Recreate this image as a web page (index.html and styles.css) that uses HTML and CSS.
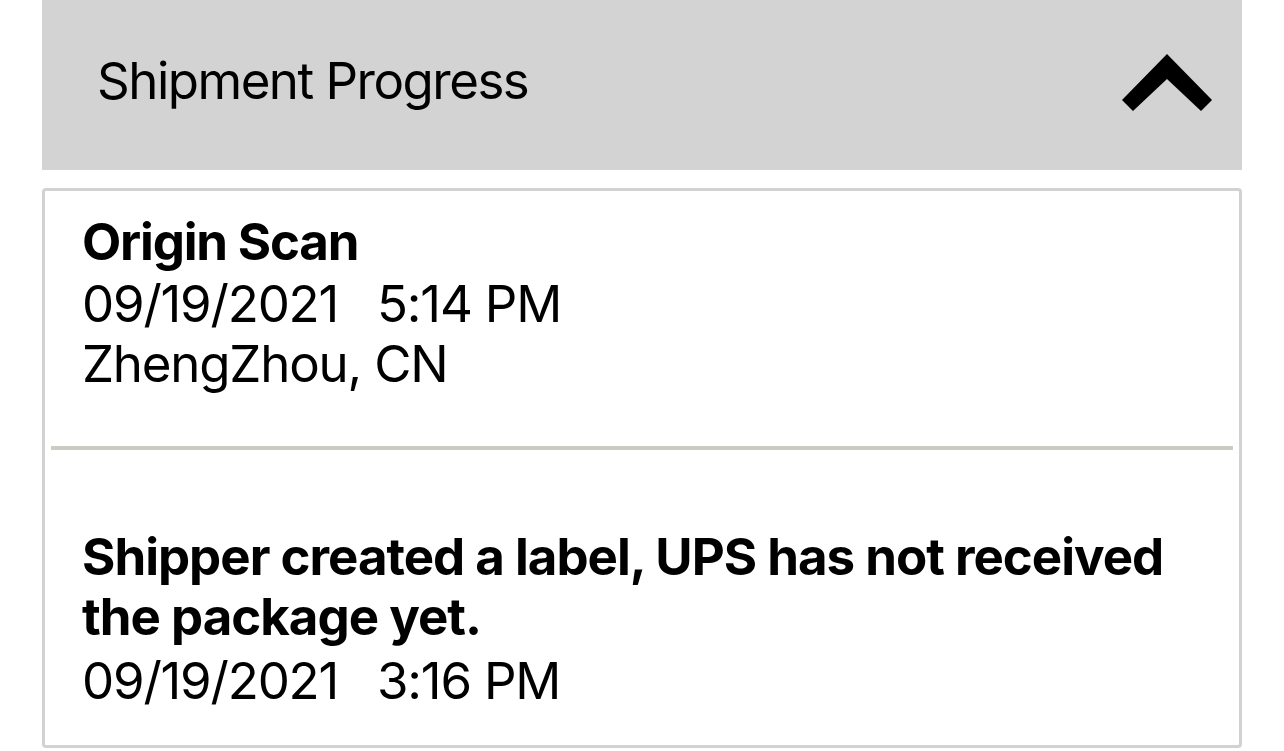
FILE: index.html
```html
<!DOCTYPE html>
<html lang="en">
    <head>
        <meta charset="UTF-8">
        <title>Shipment Progress</title>
        <link rel="stylesheet" href="styles.css">
    </head>
    <body>
        <div class="panel">
            <div class="panel-head">
                <span class="panel-title">Shipment Progress</span>
                <svg class="chevron" width="90" height="57" viewBox="0 0 90 57">
                    <polygon points="45,0 0,46 11,57 45,25 79,57 90,46"/>
                </svg>
            </div>
            <ul class="events">
                <li class="event first">
                    <div class="event-title">Origin Scan</div>
                    <div class="event-time"><span>09/19/2021</span><span>5:14 PM</span></div>
                    <div class="event-place">ZhengZhou, CN</div>
                </li>
                <li class="event second">
                    <div class="event-title">Shipper created a label, UPS has not received the package yet.</div>
                    <div class="event-time"><span>09/19/2021</span><span>3:16 PM</span></div>
                </li>
            </ul>
        </div>
    </body>
</html>
```

FILE: styles.css
```css
*{
    margin: 0;
    padding: 0;
}
ul{
    list-style: none;
}
html,body{
    width: 100%;
    height: 100%;
    background: #fff;
    overflow: hidden;
}
body{
    font-family: Inter, "Liberation Sans", sans-serif;
    font-size: 51px;
    letter-spacing: -1.2px;
    color: #000;
}
.panel{
    margin: 0 42px;
}
.panel-head{
    height: 170px;
    background: #d3d3d3;
    display: flex;
    align-items: flex-start;
    justify-content: space-between;
    padding: 0 30px 0 55px;
}
.panel-title{
    line-height: 60px;
    margin-top: 51px;
    letter-spacing: -1.5px;
}
.chevron{
    margin-top: 54px;
}
.events{
    margin-top: 18px;
    border: 3px solid #d2d2d2;
    border-radius: 4px;
    padding: 0 6px;
}
.event{
    padding: 21px 31px 52px;
    line-height: 60px;
}
.event.first{
    border-bottom: 4px solid #cdc9c3;
}
.event.second{
    padding-top: 77px;
    padding-bottom: 34px;
}
.event-title{
    font-weight: 700;
    margin-bottom: 2px;
}
.event.second .event-title{
    letter-spacing: -1px;
    margin-bottom: 4px;
}
.event-time{
    display: flex;
    gap: 39px;
}
```
